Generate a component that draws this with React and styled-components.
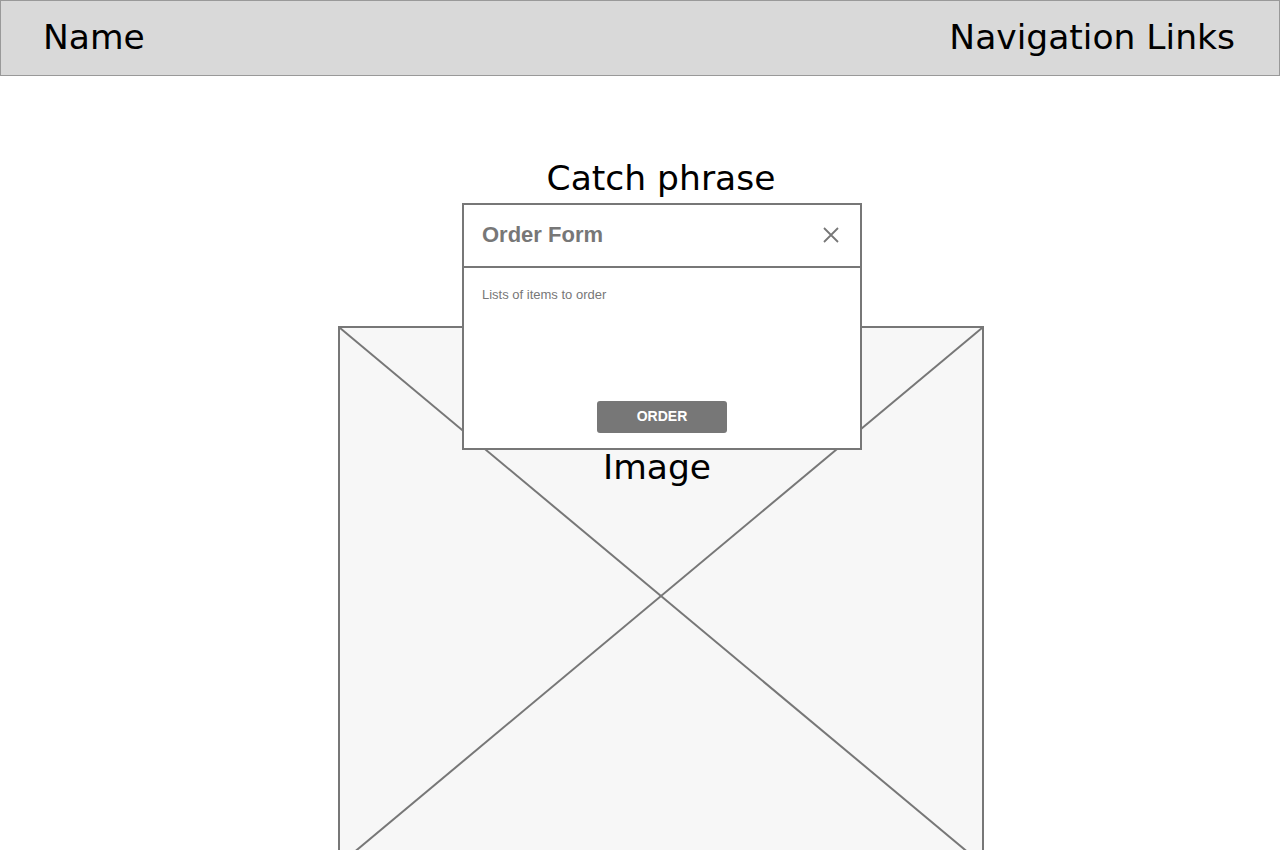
import React from "react";
import styled, { createGlobalStyle } from "styled-components";

const GlobalStyle = createGlobalStyle`
  html, body {
    margin: 0;
    padding: 0;
    background: #ffffff;
    overflow: hidden;
  }
  body {
    font-family: "DejaVu Sans", "Liberation Sans", sans-serif;
    color: #000;
  }
`;

const Page = styled.div`
  position: relative;
  width: 1280px;
  height: 850px;
  overflow: hidden;
`;

const Header = styled.header`
  box-sizing: border-box;
  height: 76px;
  display: flex;
  align-items: center;
  justify-content: space-between;
  padding: 0 44px 3px 42px;
  background: #d9d9d9;
  border: 1px solid #999999;
  font-size: 34.5px;
`;

const Main = styled.main`
  display: flex;
  flex-direction: column;
  align-items: center;
  padding: 79px 0 0 42px;
`;

const CatchPhrase = styled.h1`
  margin: 0;
  font-weight: normal;
  font-size: 34.5px;
  line-height: 46px;
`;

const ImageBox = styled.div`
  position: relative;
  box-sizing: border-box;
  width: 646px;
  height: 540px;
  margin-top: 125px;
  background: #f7f7f7;
  border: 2px solid #777777;
  display: flex;
  justify-content: center;
`;

const Cross = styled.svg`
  position: absolute;
  inset: 0;
  width: 100%;
  height: 100%;
`;

const ImageLabel = styled.span`
  position: relative;
  margin-top: 116px;
  margin-left: -8px;
  font-size: 34.5px;
  line-height: 46px;
  height: 46px;
`;

const Modal = styled.div`
  position: absolute;
  top: 203px;
  left: 462px;
  box-sizing: border-box;
  width: 400px;
  height: 247px;
  background: #ffffff;
  border: 2px solid #777777;
  display: flex;
  flex-direction: column;
  font-family: "Liberation Sans", Arial, sans-serif;
`;

const ModalHead = styled.div`
  box-sizing: border-box;
  height: 63px;
  display: flex;
  align-items: center;
  justify-content: space-between;
  padding: 0 20px 2px 18px;
  border-bottom: 2px solid #777777;
`;

const ModalTitle = styled.h2`
  margin: 0;
  font-size: 22px;
  font-weight: bold;
  color: #777777;
`;

const CloseButton = styled.button`
  display: flex;
  padding: 0;
  border: none;
  background: none;
  cursor: pointer;
`;

const ModalBody = styled.div`
  flex: 1;
  display: flex;
  flex-direction: column;
  padding: 19px 18px 15px;
`;

const Note = styled.p`
  margin: 0;
  font-size: 13px;
  color: #777777;
`;

const OrderButton = styled.button`
  margin: auto auto 0;
  width: 130px;
  height: 32px;
  border: none;
  border-radius: 3px;
  background: #777777;
  color: #ffffff;
  font-family: "Liberation Sans", Arial, sans-serif;
  font-size: 14px;
  font-weight: bold;
  padding: 0 0 3px;
`;

export default function App() {
  return (
    <Page>
      <GlobalStyle />
      <Header>
        <span>Name</span>
        <span>Navigation Links</span>
      </Header>
      <Main>
        <CatchPhrase>Catch phrase</CatchPhrase>
        <ImageBox>
          <Cross viewBox="0 0 100 100" preserveAspectRatio="none">
            <line x1="0" y1="0" x2="100" y2="100" stroke="#777" strokeWidth="2" vectorEffect="non-scaling-stroke" />
            <line x1="100" y1="0" x2="0" y2="100" stroke="#777" strokeWidth="2" vectorEffect="non-scaling-stroke" />
          </Cross>
          <ImageLabel>Image</ImageLabel>
        </ImageBox>
      </Main>
      <Modal>
        <ModalHead>
          <ModalTitle>Order Form</ModalTitle>
          <CloseButton aria-label="Close">
            <svg width="18" height="18" viewBox="0 0 18 18">
              <path d="M2 2 L16 16 M16 2 L2 16" stroke="#777" strokeWidth="1.8" fill="none" />
            </svg>
          </CloseButton>
        </ModalHead>
        <ModalBody>
          <Note>Lists of items to order</Note>
          <OrderButton>ORDER</OrderButton>
        </ModalBody>
      </Modal>
    </Page>
  );
}
